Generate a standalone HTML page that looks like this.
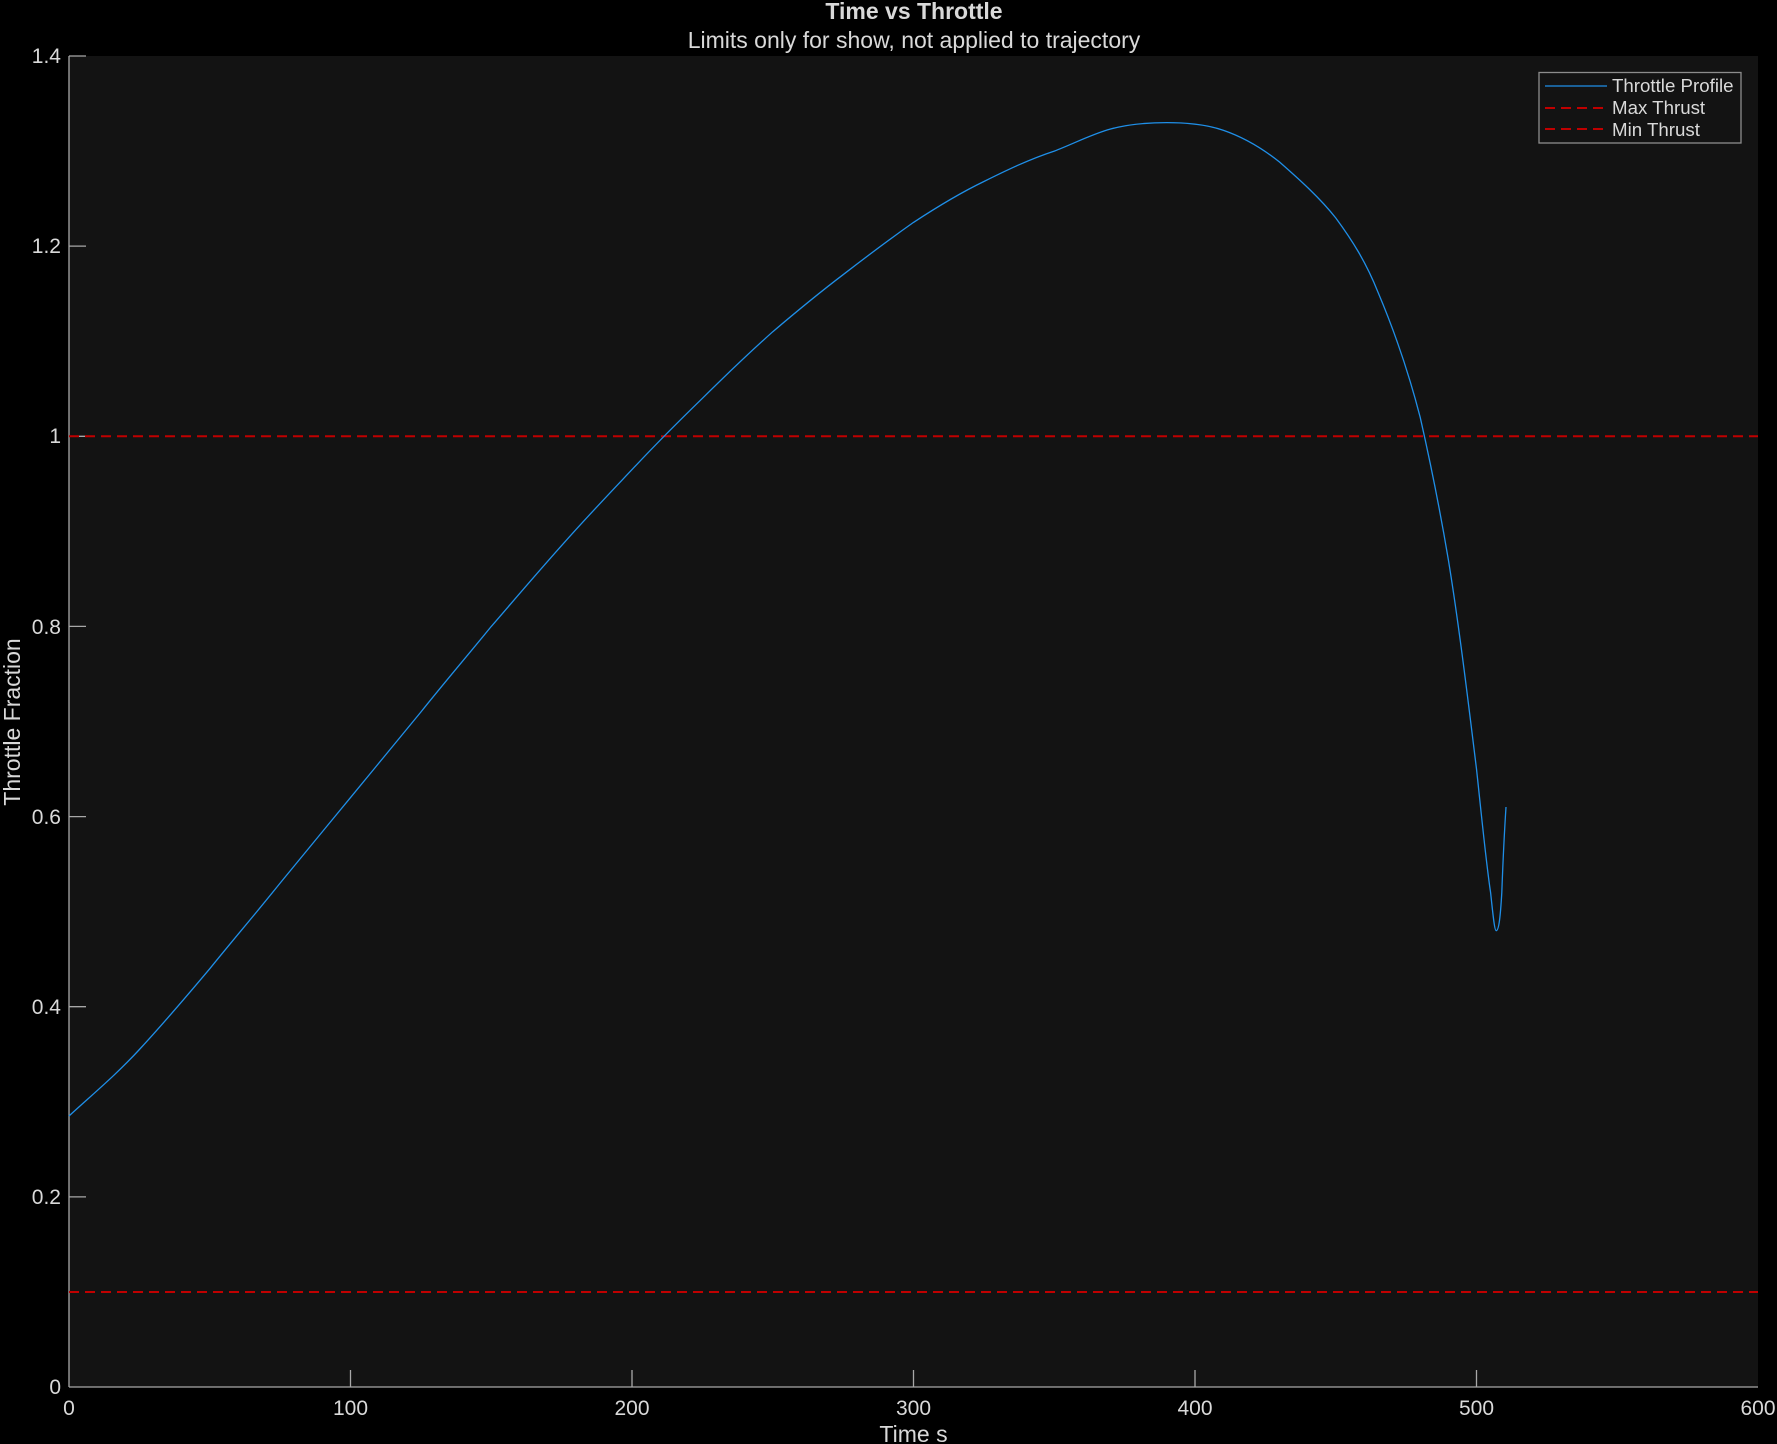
<!DOCTYPE html>
<html><head><meta charset="utf-8"><style>
html,body{margin:0;padding:0;background:#000;}
svg{display:block;}
text{font-family:"Liberation Sans",Arial,sans-serif;fill:#d9d9d9;}
</style></head><body>
<svg width="1777" height="1444" viewBox="0 0 1777 1444" xmlns="http://www.w3.org/2000/svg">
<rect width="1777" height="1444" fill="#000"/>
<rect x="69" y="56" width="1689" height="1331" fill="#131313"/>
<g stroke="#a8a8a8" stroke-width="1.3">
<line x1="69" y1="1387" x2="1758" y2="1387"/>
<line x1="69" y1="56" x2="69" y2="1387"/>
<line x1="350.5" y1="1387" x2="350.5" y2="1370"/>
<line x1="632" y1="1387" x2="632" y2="1370"/>
<line x1="913.5" y1="1387" x2="913.5" y2="1370"/>
<line x1="1195" y1="1387" x2="1195" y2="1370"/>
<line x1="1476.5" y1="1387" x2="1476.5" y2="1370"/>
<line x1="69" y1="1196.9" x2="86" y2="1196.9"/>
<line x1="69" y1="1006.7" x2="86" y2="1006.7"/>
<line x1="69" y1="816.6" x2="86" y2="816.6"/>
<line x1="69" y1="626.4" x2="86" y2="626.4"/>
<line x1="69" y1="436.3" x2="86" y2="436.3"/>
<line x1="69" y1="246.1" x2="86" y2="246.1"/>
<line x1="69" y1="56" x2="86" y2="56"/>
</g>
<g font-size="21" text-anchor="end">
<text x="61" y="1394">0</text>
<text x="61" y="1204">0.2</text>
<text x="61" y="1014">0.4</text>
<text x="61" y="824">0.6</text>
<text x="61" y="634">0.8</text>
<text x="61" y="443">1</text>
<text x="61" y="253">1.2</text>
<text x="61" y="63">1.4</text>
</g>
<g font-size="21" text-anchor="middle">
<text x="69" y="1415">0</text>
<text x="350.5" y="1415">100</text>
<text x="632" y="1415">200</text>
<text x="913.5" y="1415">300</text>
<text x="1195" y="1415">400</text>
<text x="1476.5" y="1415">500</text>
<text x="1758" y="1415">600</text>
</g>
<text x="913.5" y="1442" font-size="23" text-anchor="middle">Time s</text>
<text transform="translate(20,722) rotate(-90)" font-size="23" text-anchor="middle">Throttle Fraction</text>
<text x="914" y="19" font-size="23" font-weight="bold" text-anchor="middle">Time vs Throttle</text>
<text x="914" y="48" font-size="23" text-anchor="middle">Limits only for show, not applied to trajectory</text>
<line x1="69" y1="436.3" x2="1758" y2="436.3" stroke="#c00000" stroke-width="2" stroke-dasharray="10,6"/>
<line x1="69" y1="1292" x2="1758" y2="1292" stroke="#c00000" stroke-width="2" stroke-dasharray="10,6"/>
<path fill="none" stroke="#1f8fe8" stroke-width="1.3" d="M69,1116 C93,1094 117,1074 139.4,1049.5 C163,1024 186,997 209.8,968.7 C233,940 257,912 280.1,883.1 C304,854 327,826 350.5,797.6 C374,769 397,741 420.9,712 C444,683 468,655 491.3,626.4 C515,599 538,572 561.6,545.6 C585,519 608,495 632,469.6 C655,445 679,421 702.4,398.3 C726,375 749,353 772.8,331.7 C796,312 819,293 843.1,274.7 C866,257 890,239 913.5,222.4 C937,207 960,193 983.9,181.5 C1007,170 1030,159 1054.3,151.1 C1073,144 1092,134 1110.6,129 C1129,124 1148,122.6 1166.9,122.6 C1186,122.6 1205,124 1223.2,130.2 C1243,137 1262,148 1279.5,162 C1300,180 1320,198 1335.8,218 C1352,240 1366,262 1377.9,292 C1394,330 1408,370 1420.2,417.3 C1431,465 1440,510 1448.4,560 C1459,625 1468,700 1476.5,769 C1482,820 1486,862 1490.6,892.6 C1493,915 1494.5,930.7 1496.2,930.7 C1499,930.7 1500.5,915 1501.8,892.6 C1503,860 1504.5,830 1506,807"/>
<rect x="1539" y="72.5" width="202" height="70.5" fill="#131313" stroke="#8c8c8c" stroke-width="1.3"/>
<line x1="1545" y1="86" x2="1607" y2="86" stroke="#1f8fe8" stroke-width="1.3"/>
<line x1="1545" y1="108" x2="1607" y2="108" stroke="#c00000" stroke-width="2" stroke-dasharray="10,6"/>
<line x1="1545" y1="129" x2="1607" y2="129" stroke="#c00000" stroke-width="2" stroke-dasharray="10,6"/>
<g font-size="18.7">
<text x="1612" y="92">Throttle Profile</text>
<text x="1612" y="114">Max Thrust</text>
<text x="1612" y="136">Min Thrust</text>
</g>
</svg>
</body></html>
